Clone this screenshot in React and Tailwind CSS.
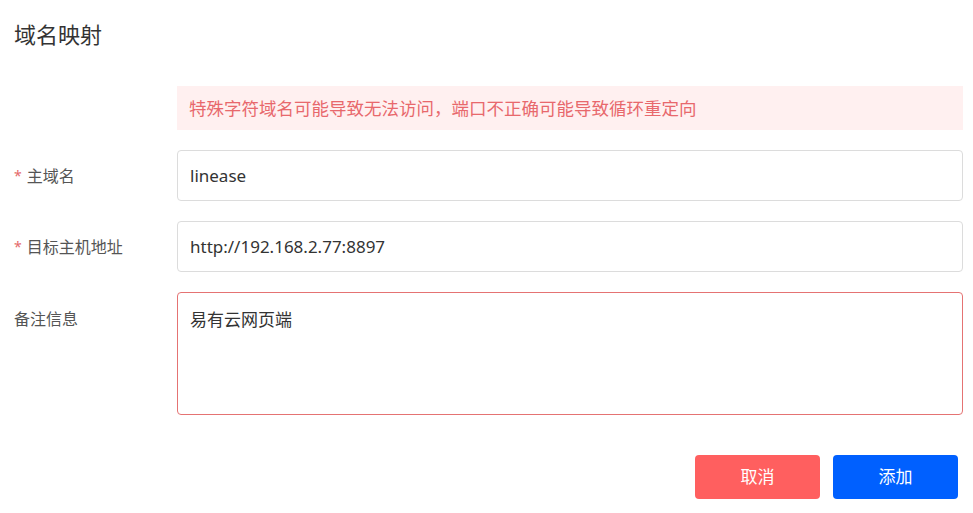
import React, { useState } from 'react';

const FONT = { fontFamily: '"Microsoft YaHei", "Noto Sans", "Noto Sans CJK SC", sans-serif' };

const Field = ({ label, required, children, top }) => (
    <div className="flex mt-5">
        <div className={`w-[163px] shrink-0 flex ${top ? 'items-start pt-[15px]' : 'items-center'} text-[16px] text-[#555]`}>
            {required && <span className="text-[#e46a6a] mr-[5px] text-[14px]">*</span>}
            <span>{label}</span>
        </div>
        <div className="flex-1">{children}</div>
    </div>
);

export default function App() {
    const [domain, setDomain] = useState('linease');
    const [host, setHost] = useState('http://192.168.2.77:8897');
    const [note, setNote] = useState('易有云网页端');

    return (
        <div className="w-[973px] h-[513px] bg-white pl-[14px] pr-[10px] pt-[20px]" style={FONT}>
            <h1 className="text-[22px] leading-[28px] font-normal text-[#333]">域名映射</h1>

            <div className="flex mt-[38px]">
                <div className="w-[163px] shrink-0" />
                <div className="flex-1 h-[44px] bg-[#fff0f0] flex items-center px-3 text-[17.5px] text-[#e8686c]">
                    特殊字符域名可能导致无法访问，端口不正确可能导致循环重定向
                </div>
            </div>

            <Field label="主域名" required>
                <input
                    value={domain}
                    onChange={(e) => setDomain(e.target.value)}
                    className="w-full h-[51px] border border-[#dcdcdc] rounded-[4px] px-3 text-[17px] text-[#333] outline-none"
                />
            </Field>

            <Field label="目标主机地址" required>
                <input
                    value={host}
                    onChange={(e) => setHost(e.target.value)}
                    className="w-full h-[51px] border border-[#dcdcdc] rounded-[4px] px-3 text-[17px] text-[#333] outline-none"
                />
            </Field>

            <Field label="备注信息" top>
                <textarea
                    value={note}
                    onChange={(e) => setNote(e.target.value)}
                    className="block w-full h-[123px] border border-[#e57373] rounded-[4px] px-3 pt-[14px] text-[17px] leading-[26px] text-[#333] outline-none resize-none"
                />
            </Field>

            <div className="flex justify-end gap-[13px] mt-10 pr-[5px]">
                <button className="w-[125px] h-[44px] rounded-[4px] bg-[#ff5f5f] text-white text-[17px]">取消</button>
                <button className="w-[125px] h-[44px] rounded-[4px] bg-[#0060ff] text-white text-[17px]">添加</button>
            </div>
        </div>
    );
}
